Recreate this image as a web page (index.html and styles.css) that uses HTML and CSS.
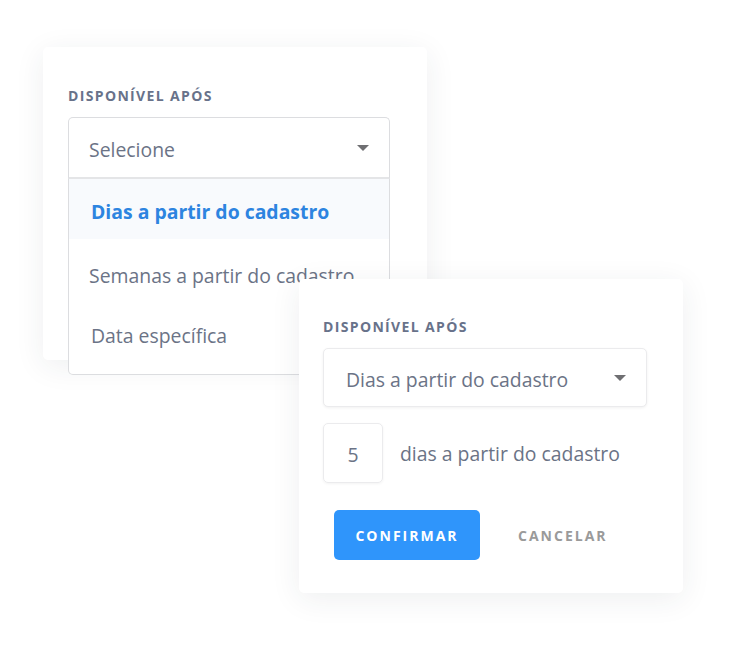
FILE: index.html
```html
<!DOCTYPE html>
<html lang="pt-BR">
<head>
    <meta charset="UTF-8">
    <meta name="viewport" content="width=device-width, initial-scale=1.0">
    <title>Disponível após</title>
    <link rel="stylesheet" href="styles.css">
</head>
<body>

<div class="stage">

    <!-- Card com o dropdown aberto -->
    <div class="card card-open">
        <div class="field-label">Disponível após</div>
        <div class="select open">
            <div class="select-head">
                <span>Selecione</span>
                <span class="caret"></span>
            </div>
            <ul class="options">
                <li class="active">Dias a partir do cadastro</li>
                <li>Semanas a partir do cadastro</li>
                <li>Data específica</li>
            </ul>
        </div>
    </div>

    <!-- Card com opção escolhida -->
    <div class="card card-chosen">
        <div class="field-label">Disponível após</div>
        <div class="select closed">
            <div class="select-head">
                <span>Dias a partir do cadastro</span>
                <span class="caret"></span>
            </div>
        </div>
        <div class="amount-row">
            <div class="amount">5</div>
            <span>dias a partir do cadastro</span>
        </div>
        <div class="actions">
            <button class="btn-primary">Confirmar</button>
            <button class="btn-link">Cancelar</button>
        </div>
    </div>

</div>

</body>
</html>
```

FILE: styles.css
```css
* {
    box-sizing: border-box;
}
body {
    margin: 0;
    font-family: "Open Sans", Arial, sans-serif;
    background-color: #ffffff;
    color: #6b7386;
}
.stage {
    position: relative;
    width: 742px;
    height: 658px;
}
.card {
    position: absolute;
    width: 384px;
    background-color: #ffffff;
    border-radius: 5px;
    box-shadow: 0 6px 30px rgba(40, 50, 70, 0.08);
}
.card-open {
    left: 43px;
    top: 47px;
    height: 313px;
    padding: 41px 37px 0 25px;
}
.card-chosen {
    left: 299px;
    top: 279px;
    height: 314px;
    padding: 40px 36px 0 24px;
    z-index: 2;
}
.field-label {
    font-size: 14px;
    font-weight: 700;
    letter-spacing: 1.35px;
    text-transform: uppercase;
    color: #68728a;
    line-height: 16px;
    margin-bottom: 13px;
}
.select {
    position: relative;
    font-size: 19.4px;
}
.select-head {
    display: flex;
    justify-content: space-between;
    align-items: center;
    height: 62px;
    padding: 4px 20px 0 20px;
    border: 1px solid #dcdde0;
    border-radius: 5px;
    background-color: #ffffff;
}
.select-head .caret {
    margin-top: -4px;
}
.select.open .select-head {
    border-radius: 5px 5px 0 0;
    border-bottom: 2px solid #e4e5e7;
}
.select.closed .select-head {
    height: 59px;
    border-color: #ebebed;
    box-shadow: 0 1px 3px rgba(0, 0, 0, 0.06);
    padding: 3px 20px 0 22px;
}
.select.closed .select-head .caret {
    margin-top: -3px;
}
.caret {
    width: 0;
    height: 0;
    border-left: 6px solid transparent;
    border-right: 6px solid transparent;
    border-top: 6px solid #6f6f72;
}
.options {
    position: absolute;
    left: 0;
    right: 0;
    top: 62px;
    margin: 0;
    padding: 0;
    list-style: none;
    background-color: #ffffff;
    border: 1px solid #dcdde0;
    border-top: none;
    border-radius: 0 0 5px 5px;
}
.options li {
    display: flex;
    align-items: center;
    height: 66px;
    padding: 6px 0 0 20px;
}
.options li.active {
    height: 60px;
    padding: 5px 0 0 22px;
    background-color: #f8fafd;
    color: #2d84e0;
    font-weight: 700;
}
.options li:last-child {
    height: 69px;
    padding: 0 0 8px 22px;
}
.amount-row {
    display: flex;
    align-items: center;
    gap: 17px;
    margin-top: 16px;
    font-size: 19.4px;
}
.amount {
    width: 60px;
    height: 60px;
    display: flex;
    align-items: center;
    justify-content: center;
    padding-top: 2px;
    border: 1px solid #ebebed;
    border-radius: 5px;
    box-shadow: 0 1px 3px rgba(0, 0, 0, 0.05);
}
.actions {
    display: flex;
    align-items: center;
    gap: 38px;
    margin-top: 27px;
    padding-left: 11px;
}
.actions button {
    font-family: "Open Sans", Arial, sans-serif;
    font-size: 14px;
    font-weight: 700;
    letter-spacing: 2px;
    text-transform: uppercase;
    border: none;
    cursor: pointer;
}
.btn-primary {
    width: 146px;
    height: 50px;
    background-color: #2f95fb;
    color: #ffffff;
    border-radius: 5px;
}
.btn-primary:hover {
    background-color: #1f84e8;
}
.btn-link {
    background: none;
    color: #9a9a9a;
    padding: 0;
}
```
